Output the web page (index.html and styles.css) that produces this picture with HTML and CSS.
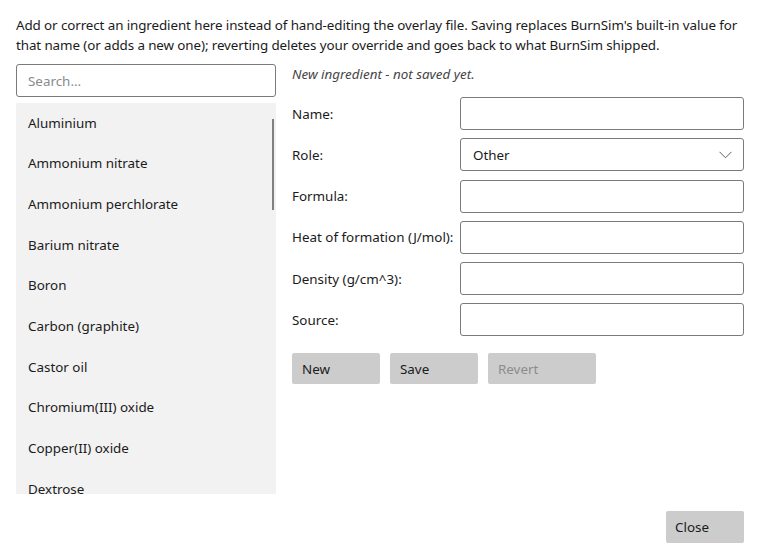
FILE: index.html
```html
<!DOCTYPE html>
<html>
<head>
<meta charset="utf-8">
<link rel="stylesheet" href="styles.css">
</head>
<body>
<div class="dialog">
  <p class="intro">Add or correct an ingredient here instead of hand-editing the overlay file. Saving replaces BurnSim's built-in value for that name (or adds a new one); reverting deletes your override and goes back to what BurnSim shipped.</p>
  <div class="main">
    <div class="left">
      <div class="search">Search...</div>
      <div class="list">
        <div class="item">Aluminium</div>
        <div class="item">Ammonium nitrate</div>
        <div class="item">Ammonium perchlorate</div>
        <div class="item">Barium nitrate</div>
        <div class="item">Boron</div>
        <div class="item">Carbon (graphite)</div>
        <div class="item">Castor oil</div>
        <div class="item">Chromium(III) oxide</div>
        <div class="item">Copper(II) oxide</div>
        <div class="item">Dextrose</div>
        <div class="thumb"></div>
      </div>
    </div>
    <div class="right">
      <div class="status">New ingredient - not saved yet.</div>
      <div class="form">
        <div class="label">Name:</div><div class="field"></div>
        <div class="label">Role:</div><div class="field select"><span>Other</span><svg width="13" height="8" viewBox="0 0 13 8"><path d="M0.5 0.8 L6.5 6.8 L12.5 0.8" fill="none" stroke="#5f5f5f" stroke-width="1"/></svg></div>
        <div class="label">Formula:</div><div class="field"></div>
        <div class="label">Heat of formation (J/mol):</div><div class="field"></div>
        <div class="label">Density (g/cm^3):</div><div class="field"></div>
        <div class="label">Source:</div><div class="field"></div>
      </div>
      <div class="buttons">
        <div class="btn w88">New</div>
        <div class="btn w88">Save</div>
        <div class="btn w108 disabled">Revert</div>
      </div>
    </div>
  </div>
  <div class="footer"><div class="btn close">Close</div></div>
</div>
</body>
</html>
```
FILE: styles.css
```css
html, body { margin: 0; padding: 0; background: #ffffff; }
body { font-family: "Noto Sans", "Open Sans", sans-serif; font-size: 13.4px; color: #1b1b1b; }
.dialog { width: 760px; height: 560px; box-sizing: border-box; padding: 15px 16px 0 16px; display: flex; flex-direction: column; }
.intro { margin: 0; line-height: 20px; letter-spacing: -0.1px; }
.main { display: flex; gap: 16px; margin-top: 9px; }
.left { width: 260px; display: flex; flex-direction: column; gap: 6px; }
.search { height: 33px; box-sizing: border-box; border: 1px solid #7a7a7a; border-radius: 3px; padding: 0 11px; display: flex; align-items: center; color: #8a8a8a; }
.list { position: relative; height: 391px; background: #f2f2f2; overflow: hidden; }
.item { height: 40.67px; display: flex; align-items: center; padding-left: 12px; box-sizing: border-box; padding-bottom: 1px; }
.thumb { position: absolute; left: 256px; top: 16px; width: 2px; height: 91px; background: #808080; }
.right { flex: 1; display: flex; flex-direction: column; }
.status { font-style: italic; color: #444444; height: 20px; line-height: 20px; margin-top: 0; }
.form { display: grid; grid-template-columns: 168px 1fr; row-gap: 8.3px; margin-top: 13px; }
.label { display: flex; align-items: center; height: 33px; }
.field { height: 33px; box-sizing: border-box; border: 1px solid #7a7a7a; border-radius: 3px; }
.select { display: flex; align-items: center; justify-content: space-between; padding: 0 11px 0 12px; }
.buttons { display: flex; gap: 10px; margin-top: 17px; }
.btn { height: 31px; box-sizing: border-box; background: #cccccc; border-radius: 2px; display: flex; align-items: center; padding-left: 10px; }
.w88 { width: 88px; }
.w108 { width: 108px; }
.disabled { color: #8c8c8c; }
.footer { display: flex; justify-content: flex-end; margin-top: 17px; }
.close { width: 78px; height: 32px; padding-left: 9px; }
```
